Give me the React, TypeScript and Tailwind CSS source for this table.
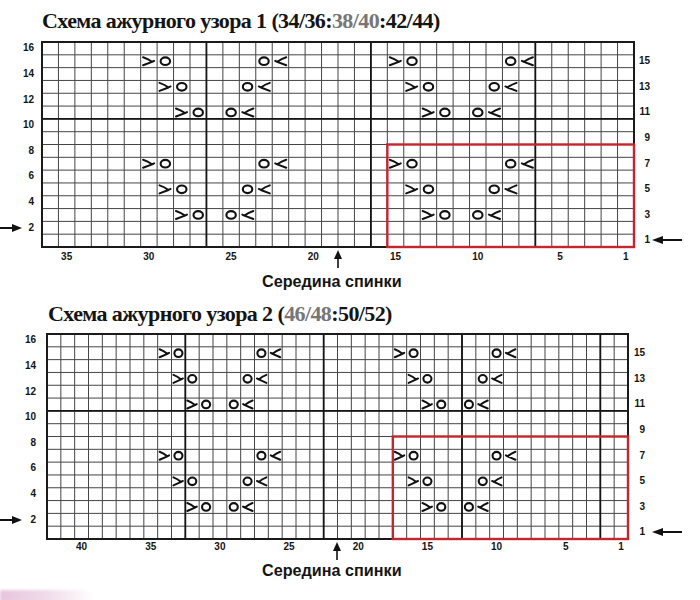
import React from 'react';

type Kind = 'ssk' | 'yo' | 'k2tog';
type Sym = { col: number; row: number; kind: Kind };

const ROWS = 16;
const GRID_H = 205;

// ажурные дорожки: пары «протяжка + накид» сходятся к центру ромба
function makeSymbols(offsets: number[]): Sym[] {
  const out: Sym[] = [];
  for (const base of [15, 7]) {
    offsets.forEach((c) => {
      [0, 1, 2].forEach((i) => {
        const row = base - i * 2;
        out.push({ col: c + 8 - i, row, kind: 'ssk' });
        out.push({ col: c + 7 - i, row, kind: 'yo' });
        out.push({ col: c + 1 + i, row, kind: 'yo' });
        out.push({ col: c + i, row, kind: 'k2tog' });
      });
    });
  }
  return out;
}

function Grid({ cols, width, redCols, symbols, thick }: { cols: number; width: number; redCols: number; symbols: Sym[]; thick: number[] }) {
  const cw = width / cols;
  const rh = GRID_H / ROWS;
  const s = cw / 16.4;

  return (
    <svg width={width} height={GRID_H} viewBox={`0 0 ${width} ${GRID_H}`} className="block overflow-visible shrink-0">
      <rect x={0} y={0} width={width} height={GRID_H} fill="#fff" />
      {Array.from({ length: cols - 1 }, (_, i) => (
        <line key={'v' + i} x1={(i + 1) * cw} y1={0} x2={(i + 1) * cw} y2={GRID_H} stroke="#454545" strokeWidth={1} />
      ))}
      {Array.from({ length: ROWS - 1 }, (_, i) => (
        <line key={'h' + i} x1={0} y1={(i + 1) * rh} x2={width} y2={(i + 1) * rh} stroke="#454545" strokeWidth={1} />
      ))}
      {thick.map((t) => (
        <line key={'t' + t} x1={t * cw} y1={0} x2={t * cw} y2={GRID_H} stroke="#151515" strokeWidth={1.8} />
      ))}
      <line x1={0} y1={6 * rh} x2={width} y2={6 * rh} stroke="#151515" strokeWidth={1.8} />
      <rect x={0} y={0} width={width} height={GRID_H} fill="none" stroke="#1a1a1a" strokeWidth={2} />

      {symbols.map((sym, i) => {
        const cx = (cols - sym.col + 0.5) * cw;
        const cy = (ROWS - sym.row + 0.5) * rh;
        if (sym.kind === 'yo') {
          return <ellipse key={i} cx={cx} cy={cy} rx={4.3 * s + 0.4} ry={3.8} fill="none" stroke="#111" strokeWidth={2.1} />;
        }
        const d = sym.kind === 'ssk' ? 1 : -1;
        const w = 5.2 * s + 0.6;
        return (
          <path
            key={i}
            d={`M${cx - d * w} ${cy - 4} Q${cx - d * w * 0.2} ${cy - 2.6} ${cx + d * w * 0.55} ${cy + 0.6} M${cx - d * w} ${cy + 4} L${cx + d * w * 0.55} ${cy + 0.6} L${cx + d * w * 0.9} ${cy - 0.4}`}
            fill="none"
            stroke="#111"
            strokeWidth={2}
            strokeLinecap="round"
            strokeLinejoin="round"
          />
        );
      })}

      <rect
        x={(cols - redCols) * cw}
        y={8 * rh}
        width={redCols * cw}
        height={8 * rh}
        fill="none"
        stroke="#c3262e"
        strokeWidth={2.4}
      />
    </svg>
  );
}

function ArrowRight() {
  return (
    <svg width="22" height="10" viewBox="0 0 22 10" className="block">
      <line x1="0" y1="5" x2="15" y2="5" stroke="#111" strokeWidth="2" />
      <polygon points="12,1 22,5 12,9" fill="#111" />
    </svg>
  );
}

function ArrowLeft() {
  return (
    <svg width="30" height="10" viewBox="0 0 30 10" className="block">
      <line x1="8" y1="5" x2="30" y2="5" stroke="#111" strokeWidth="2" />
      <polygon points="0,5 11,1 11,9" fill="#111" />
    </svg>
  );
}

function ArrowUp() {
  return (
    <svg width="8" height="18" viewBox="0 0 8 18" className="block">
      <polygon points="4,0 8,9 0,9" fill="#111" />
      <line x1="4" y1="7" x2="4" y2="18" stroke="#111" strokeWidth="1.6" />
    </svg>
  );
}

const label = "font-['Liberation_Sans',Arial,sans-serif] font-bold text-[10px] leading-none text-[#141414]";

type ChartProps = {
  title: string;
  gray: string;
  rest: string;
  titlePad: string;
  titleGap: string;
  cols: number;
  width: number;
  redCols: number;
  offsets: number[];
  thick: number[];
  ticks: number[];
  midCell: number;
  leftW: string;
  rightW: string;
  rightArrowGap: string;
  colsClass: string;
  bottomH: string;
  captionGap: string;
};

function Chart(p: ChartProps) {
  const symbols = makeSymbols(p.offsets);
  const rowsDown = Array.from({ length: ROWS }, (_, i) => ROWS - i);

  return (
    <section className="flex flex-col">
      <h2
        className={`${p.titlePad} ${p.titleGap} h-[26px] font-['Liberation_Serif','Times_New_Roman',serif] font-bold text-[22px] leading-[26px] tracking-[-0.6px] text-[#141414] whitespace-nowrap`}
      >
        {p.title}
        <span className="text-[#767676]">{p.gray}</span>
        {p.rest}
      </h2>
      <div className="flex">
        <div className={`${p.leftW} shrink-0 flex flex-col`}>
          {rowsDown.map((r) => (
            <div key={r} className="h-[12.8px] flex items-center justify-between">
              <span>{r === 2 ? <ArrowRight /> : null}</span>
              <span className={label}>{r % 2 === 0 ? r : ''}</span>
            </div>
          ))}
        </div>
        <Grid cols={p.cols} width={p.width} redCols={p.redCols} symbols={symbols} thick={p.thick} />
        <div className="flex flex-col">
          {rowsDown.map((r) => (
            <div key={r} className="h-[12.8px] flex items-center">
              <span className={`${p.rightW} text-right ${label}`}>{r % 2 === 1 ? r : ''}</span>
              {r === 1 ? (
                <span className={p.rightArrowGap}>
                  <ArrowLeft />
                </span>
              ) : null}
            </div>
          ))}
        </div>
      </div>
      <div className={`flex ${p.bottomH}`}>
        <div className={`${p.leftW} shrink-0`} />
        <div className={`grid ${p.colsClass}`}>
          {Array.from({ length: p.cols }, (_, i) => {
            const n = p.cols - i;
            return (
              <div key={i} className="flex items-center justify-center relative">
                {i === p.midCell ? (
                  <span className="absolute left-[-4px] top-[3px]">
                    <ArrowUp />
                  </span>
                ) : null}
                <span className={label}>{p.ticks.includes(n) ? n : ''}</span>
              </div>
            );
          })}
        </div>
      </div>
      <p
        className={`${p.captionGap} pl-[262px] h-[18px] font-['Liberation_Sans',Arial,sans-serif] font-bold text-[16.2px] leading-[18px] text-[#141414] whitespace-nowrap`}
      >
        Середина спинки
      </p>
    </section>
  );
}

export default function App() {
  return (
    <div className="w-[700px] h-[600px] bg-white overflow-hidden flex flex-col">
      <div className="pt-[8px]">
        <Chart
          title="Схема ажурного узора 1 (34/36:"
          gray="38/40"
          rest=":42/44)"
          titlePad="pl-[42px]"
          titleGap="mb-[8px]"
          cols={36}
          width={592}
          redCols={15}
          offsets={[22, 7]}
          thick={[10, 20, 30]}
          ticks={[35, 30, 25, 20, 15, 10, 5, 1]}
          midCell={18}
          leftW="w-[42px] pr-[8px] box-border"
          rightW="w-[16px]"
          rightArrowGap="ml-[2px]"
          colsClass="grid-cols-[repeat(36,minmax(0,1fr))] w-[592px]"
          bottomH="h-[20px]"
          captionGap="mt-[5px]"
        />
      </div>
      <div className="pt-[11px]">
        <Chart
          title="Схема ажурного узора 2 ("
          gray="46/48"
          rest=":50/52)"
          titlePad="pl-[48px]"
          titleGap="mb-[7px]"
          cols={42}
          width={581}
          redCols={17}
          offsets={[26, 9]}
          thick={[10, 20, 30, 40]}
          ticks={[40, 35, 30, 25, 20, 15, 10, 5, 1]}
          midCell={21}
          leftW="w-[47px] pr-[11px] box-border"
          rightW="w-[17px]"
          rightArrowGap="ml-[7px]"
          colsClass="grid-cols-[repeat(42,minmax(0,1fr))] w-[581px]"
          bottomH="h-[16px]"
          captionGap="mt-[6px]"
        />
      </div>
      <div className="mt-auto mb-[-2px] h-[12px] w-[95px] rounded-tr-full bg-gradient-to-r from-[#e7c4dd] via-[#f0dcea] to-transparent blur-[1.5px]" />
    </div>
  );
}
